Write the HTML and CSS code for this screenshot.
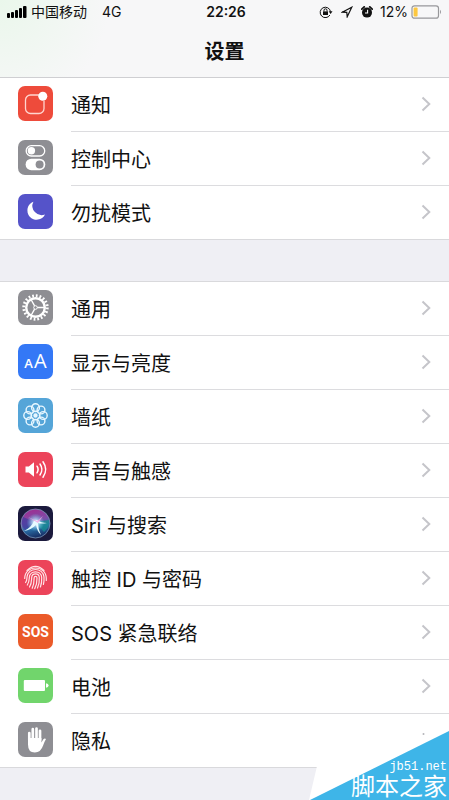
FILE: index.html
```
<!DOCTYPE html>
<html lang="zh-CN">
<head>
  <meta charset="UTF-8">
  <meta name="viewport" content="width=device-width, initial-scale=1">
  <title>设置</title>
  <link rel="stylesheet" href="styles.css">
</head>
<body>
  <svg class="defs" aria-hidden="true">
    <symbol id="chevron" viewBox="0 0 10 16">
      <path d="M1.5 1.5 8.3 8l-6.8 6.5" fill="none" stroke="#c5c5ca" stroke-width="2"/>
    </symbol>
  </svg>

  <header class="header">
    <div class="status">
      <div class="status-left">
        <svg class="signal" viewBox="0 0 20 12">
          <rect x="0" y="7" width="3" height="5" rx="1"/>
          <rect x="4" y="6" width="3" height="6" rx="1"/>
          <rect x="8" y="4" width="3" height="8" rx="1"/>
          <rect x="12" y="2" width="3" height="10" rx="1"/>
          <rect x="16" y="0" width="3.5" height="12" rx="1"/>
        </svg>
        <span>中国移动</span>
        <span class="network">4G</span>
      </div>
      <div class="time">22:26</div>
      <div class="status-right">
        <svg class="lock" viewBox="0 0 14 12" fill="none" stroke="#111">
          <path d="M10.9 9A5.2 5.2 0 1 1 11.5 5.5"/>
          <path d="M9.7 5.2h3.8L11.6 8z" fill="#111" stroke="none"/>
          <rect x="4" y="5.4" width="5" height="3.6" fill="#111" stroke="none"/>
          <path d="M5 5.5V4.3a1.5 1.5 0 0 1 3 0v1.2"/>
        </svg>
        <svg class="location" viewBox="0 0 12 12" fill="none" stroke="#111" stroke-width="1.2">
          <path d="M1.2 6.2 10.8 1.2 6.2 10.8 5.8 6.4z"/>
        </svg>
        <svg class="alarm" viewBox="0 0 12 12">
          <circle cx="6" cy="6.6" r="5" fill="#111"/>
          <path d="M.8 3.1 3.2.9M11.2 3.1 8.8.9" stroke="#111" stroke-width="1.8" stroke-linecap="round"/>
          <path d="M6.6 3.8V7H4" fill="none" stroke="#f7f7f8" stroke-width="1.1"/>
        </svg>
        <span>12%</span>
        <svg class="level" viewBox="0 0 31 14">
          <rect x="1" y=".8" width="26.5" height="12.4" rx="2.5" fill="none" stroke="#98989b" stroke-width="1.2"/>
          <rect x="2.6" y="2.4" width="4" height="9.2" rx="1" fill="#fdc840"/>
          <path d="M29 4.8q2 2.2 0 4.4z" fill="#98989b"/>
        </svg>
      </div>
    </div>
    <h1 class="title">设置</h1>
  </header>

  <main>
    <nav class="group">
      <a class="row" href="#notifications">
        <svg class="icon red" viewBox="0 0 35 35">
          <path d="M21 9H12.5a5 5 0 0 0-5 5v8.5a5 5 0 0 0 5 5H21a5 5 0 0 0 5-5V15" fill="none" stroke="#ffd5cf" stroke-width="1.3"/>
          <circle cx="24.8" cy="10.2" r="4.5" fill="#fff"/>
        </svg>
        <span class="label">通知<svg class="chevron"><use href="#chevron"/></svg></span>
      </a>
      <a class="row" href="#control">
        <svg class="icon gray" viewBox="0 0 35 35">
          <rect x="8.2" y="5.7" width="18.5" height="10.3" rx="5.1" fill="none" stroke="#fff" stroke-width="1.3"/>
          <circle cx="13.4" cy="10.8" r="3.7" fill="#fff"/>
          <rect x="7.6" y="18.7" width="19.7" height="11.5" rx="5.7" fill="#fff"/>
          <circle cx="21.6" cy="24.4" r="4" fill="#8e8e93"/>
        </svg>
        <span class="label">控制中心<svg class="chevron"><use href="#chevron"/></svg></span>
      </a>
      <a class="row" href="#dnd">
        <svg class="icon purple" viewBox="0 0 35 35">
          <path d="M15.4 7.7A9.3 9.3 0 1 0 27 20.5 9.3 9.3 0 0 1 15.4 7.7z" fill="#fff"/>
        </svg>
        <span class="label">勿扰模式<svg class="chevron"><use href="#chevron"/></svg></span>
      </a>
    </nav>

    <nav class="group">
      <a class="row" href="#general">
        <svg class="icon gray" viewBox="0 0 35 35" fill="none" stroke="#fff">
          <circle cx="17.5" cy="17.5" r="11.7" stroke-width="3" stroke-dasharray="1.75 1.925"/>
          <circle cx="17.5" cy="17.5" r="9.3" stroke-width="2.4"/>
          <circle cx="17.5" cy="17.5" r="1.8" stroke-width="1"/>
          <path d="M19.3 17.5H26M16.6 15.9 13.3 10M16.6 19.1 13.3 25" stroke-width="1.4"/>
        </svg>
        <span class="label">通用<svg class="chevron"><use href="#chevron"/></svg></span>
      </a>
      <a class="row" href="#display">
        <span class="icon blue letters"><small>A</small>A</span>
        <span class="label">显示与亮度<svg class="chevron"><use href="#chevron"/></svg></span>
      </a>
      <a class="row" href="#wallpaper">
        <svg class="icon sky" viewBox="0 0 35 35" fill="none" stroke="#e8f7ff" stroke-width="1.4">
          <circle cx="17.5" cy="9.7" r="3.9"/>
          <circle cx="23" cy="12" r="3.9"/>
          <circle cx="25.3" cy="17.5" r="3.9"/>
          <circle cx="23" cy="23" r="3.9"/>
          <circle cx="17.5" cy="25.3" r="3.9"/>
          <circle cx="12" cy="23" r="3.9"/>
          <circle cx="9.7" cy="17.5" r="3.9"/>
          <circle cx="12" cy="12" r="3.9"/>
          <circle cx="17.5" cy="17.5" r="4.4"/>
          <circle cx="17.5" cy="17.5" r="1.5" fill="#e8f7ff"/>
        </svg>
        <span class="label">墙纸<svg class="chevron"><use href="#chevron"/></svg></span>
      </a>
      <a class="row" href="#sounds">
        <svg class="icon pink" viewBox="0 0 35 35" fill="none" stroke="#fff" stroke-width="1.5" stroke-linecap="round">
          <path d="M7.5 14.5h3.3l5.2-4.2v14.4l-5.2-4.2H7.5z" fill="#fff" stroke="none"/>
          <path d="M19 14.2q2.2 3.3 0 6.6M22 12q3.8 5.5 0 11M25 9.8q5.4 7.7 0 15.4"/>
        </svg>
        <span class="label">声音与触感<svg class="chevron"><use href="#chevron"/></svg></span>
      </a>
      <a class="row" href="#siri">
        <svg class="icon navy" viewBox="0 0 35 35">
          <defs>
            <linearGradient id="orb" x1=".35" y1="0" x2=".6" y2="1">
              <stop offset="0" stop-color="#a02c91"/>
              <stop offset=".4" stop-color="#7d4da8"/>
              <stop offset=".65" stop-color="#2a6fa8"/>
              <stop offset="1" stop-color="#14265c"/>
            </linearGradient>
            <radialGradient id="glow">
              <stop offset="0" stop-color="#fff"/>
              <stop offset=".3" stop-color="#c9eaff" stop-opacity=".8"/>
              <stop offset="1" stop-color="#63c8e8" stop-opacity="0"/>
            </radialGradient>
          </defs>
          <circle cx="17.5" cy="17.5" r="14.5" fill="url(#orb)" stroke="#7896b8" stroke-width=".8"/>
          <path d="M17 16 31 14q1 7-5 12z" fill="#168d91" opacity=".75"/>
          <path d="M17 16 5 11q-3 8 2 13z" fill="#403ba0" opacity=".7"/>
          <circle cx="17.5" cy="16.5" r="9" fill="url(#glow)"/>
          <path d="M6 25q7-3 10-10l3-1q4 3 10 3-6 1-9 0 0 6 3 12-4-4-5-10-5 5-12 6z" fill="#e6faff"/>
          <path d="M10 11l9 4 6-5-5 7z" fill="#f4a3e4" opacity=".8"/>
        </svg>
        <span class="label">Siri 与搜索<svg class="chevron"><use href="#chevron"/></svg></span>
      </a>
      <a class="row" href="#touchid">
        <svg class="icon pink" viewBox="0 0 35 35" fill="none" stroke="#ffe3e6" stroke-width="1.2" stroke-linecap="round">
          <path d="M9 10.5q8.5-8.5 17 0"/>
          <path d="M6.7 18.5c0-14 21.6-14 21.6 0v2"/>
          <path d="M7.6 22.5c1.5-2 1.1-3 1.4-5.5 1-10 16-10 17 0q.3 4-.6 7.5"/>
          <path d="M9.3 25c2-3 1.8-5 2-7.5.5-7.5 11.9-7.5 12.4 0q.3 5-1.3 9.5"/>
          <path d="M11.5 27c2.3-4 2-6.5 2.2-9.5.3-4.8 7.3-4.8 7.6 0q.4 6-1.8 10.5"/>
          <path d="M14.2 28.3c2-4 1.9-7 1.9-10.3 0-2.2 2.9-2.2 2.9 0q.1 6-2.3 10.6"/>
        </svg>
        <span class="label">触控 ID 与密码<svg class="chevron"><use href="#chevron"/></svg></span>
      </a>
      <a class="row" href="#sos">
        <span class="icon orange sos">SOS</span>
        <span class="label">SOS 紧急联络<svg class="chevron"><use href="#chevron"/></svg></span>
      </a>
      <a class="row" href="#battery">
        <svg class="icon green" viewBox="0 0 35 35" fill="#fff">
          <rect x="5.8" y="12" width="21.2" height="11" rx="1"/>
          <path d="M28 15.3q2.6.2 2.6 2.2T28 19.7z"/>
        </svg>
        <span class="label">电池<svg class="chevron"><use href="#chevron"/></svg></span>
      </a>
      <a class="row" href="#privacy">
        <svg class="icon gray" viewBox="0 0 35 35">
          <path d="M11.3 18V11M14.8 17V7.2M18.5 17V6.5M22 18V8.8" stroke="#fff" stroke-width="2.7" stroke-linecap="round"/>
          <path d="M10 16h13.4v4.5l2-3.2q1.3-1.4 2.6-.3-1.7 3-2.8 6.2-2.4 7.3-8.4 7.3-6.8 0-6.8-8z" fill="#fff"/>
        </svg>
        <span class="label">隐私<svg class="chevron"><use href="#chevron"/></svg></span>
      </a>
    </nav>
  </main>

  <div class="corner">
    <svg class="corner-bg" viewBox="0 0 140 86">
      <path d="M0 86 8 52 40 44 100 20V0h40v86z" fill="#fff"/>
      <path d="M1 86 140 17v69z" fill="#3eb5e8"/>
      <circle cx="114.5" cy="20" r="1" fill="#b5b5ba"/>
    </svg>
    <div class="corner-text">
      <span class="site">jb51.net</span>
      <span class="site-name">脚本之家</span>
    </div>
  </div>
</body>
</html>
```
FILE: styles.css
```
* {
  box-sizing: border-box;
}
body {
  margin: 0;
  min-height: 100vh;
  position: relative;
  background: #efeff4;
  color: #111;
  font-family: Inter, "Noto Sans CJK SC", sans-serif;
}
svg {
  display: block;
  flex: none;
}
.defs {
  display: none;
}

/* header */
.header {
  background: radial-gradient(circle at 0 0, #eaf7eb 0, #f7f7f8 110px);
  border-bottom: 1px solid #cfcfd2;
}
.status {
  display: grid;
  grid-template-columns: 1fr auto 1fr;
  align-items: center;
  height: 24px;
  padding: 0 7px;
  font-size: 14px;
  line-height: 24px;
}
.status-left,
.status-right {
  display: flex;
  align-items: center;
}
.status-right {
  justify-content: flex-end;
}
.signal {
  width: 20px;
  height: 12px;
  margin-right: 4px;
}
.network {
  margin-left: 15px;
}
.time {
  padding-left: 3px;
  font-weight: 600;
}
.lock {
  width: 14px;
  height: 12px;
}
.location,
.alarm {
  width: 12px;
  height: 12px;
  margin-left: 8px;
}
.alarm {
  margin-right: 7px;
}
.level {
  width: 31px;
  height: 14px;
  margin-left: 3px;
}
.title {
  margin: 0;
  padding-top: 3px;
  font-size: 20px;
  font-weight: 600;
  line-height: 50px;
  text-align: center;
}

/* list */
.group {
  background: #fff;
  border-bottom: 1px solid #d9d9dc;
}
.group + .group {
  margin-top: 41px;
  border-top: 1px solid #d9d9dc;
}
.row {
  display: flex;
  align-items: center;
  height: 54px;
  padding-left: 18px;
  color: inherit;
  text-decoration: none;
}
.row:last-child,
.row:last-child .label {
  height: 53px;
  border-bottom: 0;
}
.icon {
  flex: none;
  width: 35px;
  height: 35px;
  margin: 0 18px 3px 0;
  border-radius: 7px;
}
.label {
  flex: 1;
  display: flex;
  align-items: center;
  justify-content: space-between;
  height: 54px;
  padding: 0 18px 1px 0;
  border-bottom: 1px solid #dcdcdf;
  font-size: 20px;
}
.chevron {
  width: 10px;
  height: 16px;
}

.red { background: #ee4b3b; }
.gray { background: #8e8e93; }
.purple { background: #5553c9; }
.blue { background: #3478f6; }
.sky { background: #55a5d8; }
.pink { background: #ec445a; }
.navy { background: #1b1a3d; }
.orange { background: #eb5a29; }
.green { background: #71d56c; }

.letters,
.sos {
  display: flex;
  justify-content: center;
  color: #fff;
}
.letters {
  align-items: baseline;
  gap: 1px;
  font: 20px/34px "Open Sans", sans-serif;
}
.letters small {
  font-size: 13px;
  font-weight: 600;
}
.sos {
  align-items: center;
  font: bold 14px Roboto, sans-serif;
}

/* corner mark over the list */
.corner {
  position: absolute;
  right: 0;
  bottom: 0;
  width: 140px;
}
.corner-bg {
  width: 100%;
}
.corner-text {
  position: absolute;
  right: 2px;
  bottom: 0;
  display: flex;
  flex-direction: column;
  align-items: flex-end;
  color: #fff;
}
.site {
  font: 12px/14px "Liberation Mono", monospace;
}
.site-name {
  font-size: 24px;
  line-height: 26px;
}
```
